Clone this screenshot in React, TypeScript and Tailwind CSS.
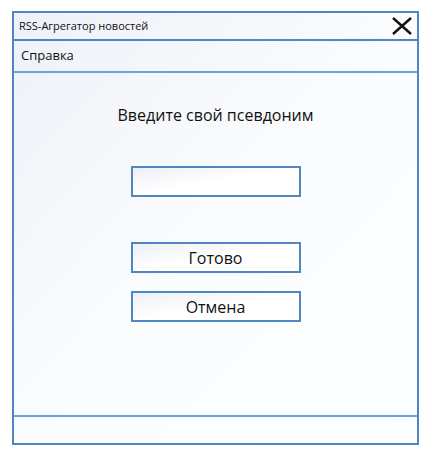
import { useState } from 'react'

const font = { fontFamily: '"Open Sans", "Noto Sans", sans-serif' }

function CloseIcon() {
  return (
    <svg viewBox="0 0 20 18" className="h-[18px] w-[20px]">
      <path d="M1 1 L19 17 M19 1 L1 17" stroke="#111" strokeWidth="2.4" fill="none" />
    </svg>
  )
}

export default function App() {
  const [nick, setNick] = useState('')

  return (
    <div className="h-[451px] w-[433px] bg-white pl-[12px] pt-[11px]" style={font}>
      <div className="flex h-[434px] w-[407px] flex-col border-2 border-[#4f87c4] bg-gradient-to-br from-[#eef1f8] via-[#fbfcfd] to-[#fdfeff]">
        <div className="flex h-[28px] items-center justify-between border-b-2 border-[#4f87c4] pl-[5px] pr-[5px]">
          <span className="text-[11px] text-[#111]">RSS-Агрегатор новостей</span>
          <CloseIcon />
        </div>

        <div className="flex h-[32px] items-center border-b-2 border-[#6aa3dc] pl-[7px]">
          <span className="text-[13px] text-[#111]">Справка</span>
        </div>

        <div className="flex flex-1 flex-col items-center pt-[31px]">
          <h1 className="text-[16px] leading-[22px] text-[#111]">Введите свой псевдоним</h1>

          <input
            value={nick}
            onChange={e => setNick(e.target.value)}
            className="mt-[40px] h-[31px] w-[170px] border-2 border-[#4f87c4] bg-gradient-to-br from-[#edf0f7] via-white to-white px-2 text-[15px] outline-none"
          />

          <button className="mt-[45px] h-[31px] w-[170px] border-2 border-[#4f87c4] bg-gradient-to-br from-[#edf0f7] via-white to-white text-[16px] text-[#111]">
            Готово
          </button>
          <button className="mt-[18px] h-[31px] w-[170px] border-2 border-[#4f87c4] bg-gradient-to-br from-[#edf0f7] via-white to-white text-[16px] text-[#111]">
            Отмена
          </button>
        </div>

        <div className="h-[28px] border-t-2 border-[#6aa3dc]" />
      </div>
    </div>
  )
}
